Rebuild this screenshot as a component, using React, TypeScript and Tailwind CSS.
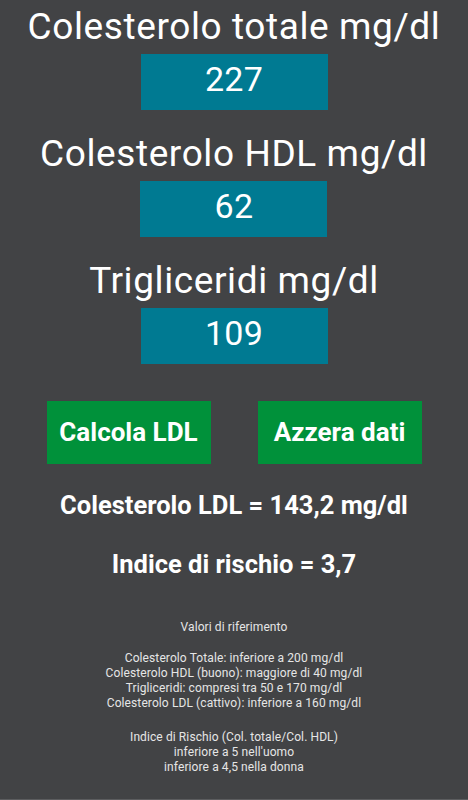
import React from 'react';

const font = { fontFamily: 'Roboto, "Liberation Sans", sans-serif' };

const fields = [
  { label: 'Colesterolo totale mg/dl', value: '227' },
  { label: 'Colesterolo HDL mg/dl', value: '62' },
  { label: 'Trigliceridi mg/dl', value: '109' },
];

export default function App() {
  return (
    <div
      style={font}
      className="w-[468px] h-[800px] bg-[#424345] border-b border-[#5c5d5f] flex flex-col items-center pt-[5px] text-white overflow-hidden"
    >
      {/* Input fields */}
      {fields.map((f, i) => (
        <div key={f.label} className={`flex flex-col items-center ${i > 0 ? 'mt-[22.5px]' : ''}`}>
          <div className="text-[37px] leading-[44px] tracking-[0.6px] whitespace-nowrap">{f.label}</div>
          <div className="mt-[5px] w-[187px] h-[55.5px] bg-[#007a92] flex items-center justify-center pb-[6px]">
            <span className="text-[34px] leading-[40px] tracking-[0.3px]">{f.value}</span>
          </div>
        </div>
      ))}

      {/* Buttons */}
      <div className="mt-[37.5px] flex gap-[47px]">
        <button className="w-[164px] h-[63px] bg-[#00913a] text-white text-[26px] font-bold flex items-center justify-center">
          Calcola LDL
        </button>
        <button className="w-[164px] h-[63px] bg-[#00913a] text-white text-[26px] font-bold flex items-center justify-center">
          Azzera dati
        </button>
      </div>

      {/* Results */}
      <div className="mt-[25px] text-[25.5px] leading-[32px] font-bold">Colesterolo LDL = 143,2 mg/dl</div>
      <div className="mt-[27px] text-[25.5px] leading-[32px] font-bold">Indice di rischio = 3,7</div>

      {/* Reference values */}
      <div className="mt-[40px] text-[12px] leading-[15.3px] text-[#e6e6e6] text-center tracking-[0.1px]">
        <p>Valori di riferimento</p>
        <p className="mt-[15.3px]">Colesterolo Totale: inferiore a 200 mg/dl</p>
        <p>Colesterolo HDL (buono): maggiore di 40 mg/dl</p>
        <p>Trigliceridi: compresi tra 50 e 170 mg/dl</p>
        <p>Colesterolo LDL (cattivo): inferiore a 160 mg/dl</p>
        <p className="mt-[18px]">Indice di Rischio (Col. totale/Col. HDL)</p>
        <p>inferiore a 5 nell'uomo</p>
        <p>inferiore a 4,5 nella donna</p>
      </div>
    </div>
  );
}
